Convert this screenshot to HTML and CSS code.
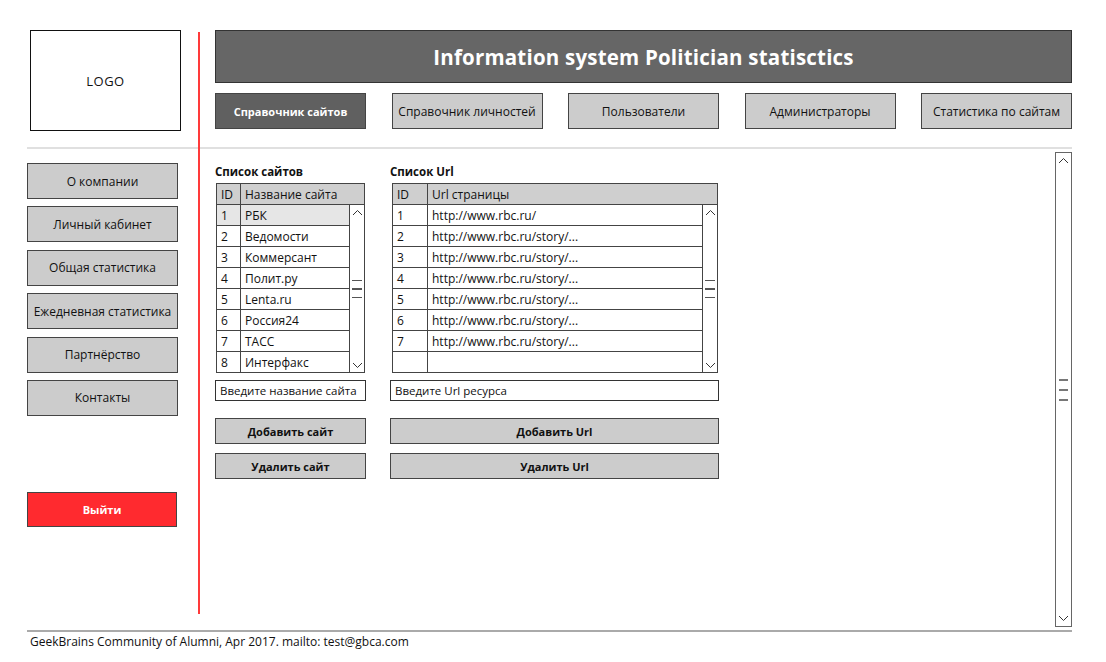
FILE: index.html
```html
<!DOCTYPE html>
<html lang="ru">
<head>
<meta charset="utf-8">
<title>Information system Politician statisctics</title>
<link rel="stylesheet" href="styles.css">
</head>
<body>
<div class="app">
  <div class="logo">LOGO</div>

  <div class="head">
    <div class="titlebar">Information system Politician statisctics</div>
    <nav class="nav">
      <div class="nbtn active">Справочник сайтов</div>
      <div class="nbtn">Справочник личностей</div>
      <div class="nbtn">Пользователи</div>
      <div class="nbtn">Администраторы</div>
      <div class="nbtn">Статистика по сайтам</div>
    </nav>
  </div>

  <div class="divider"></div>

  <aside class="side">
    <div class="sbtn">О компании</div>
    <div class="sbtn">Личный кабинет</div>
    <div class="sbtn">Общая статистика</div>
    <div class="sbtn">Ежедневная статистика</div>
    <div class="sbtn">Партнёрство</div>
    <div class="sbtn">Контакты</div>
    <div class="logout">Выйти</div>
  </aside>

  <main class="main">
    <section class="group sites">
      <h3 class="gtitle">Список сайтов</h3>
      <div class="table">
        <div class="thead"><div class="c-id">ID</div><div class="c-name">Название сайта</div></div>
        <div class="tbody">
          <div class="rows">
            <div class="row sel"><div class="c-id">1</div><div class="c-name">РБК</div></div>
            <div class="row"><div class="c-id">2</div><div class="c-name">Ведомости</div></div>
            <div class="row"><div class="c-id">3</div><div class="c-name">Коммерсант</div></div>
            <div class="row"><div class="c-id">4</div><div class="c-name">Полит.ру</div></div>
            <div class="row"><div class="c-id">5</div><div class="c-name">Lenta.ru</div></div>
            <div class="row"><div class="c-id">6</div><div class="c-name">Россия24</div></div>
            <div class="row"><div class="c-id">7</div><div class="c-name">ТАСС</div></div>
            <div class="row last"><div class="c-id">8</div><div class="c-name">Интерфакс</div></div>
          </div>
          <div class="vscroll">
            <svg class="chev" width="11" height="7" viewBox="0 0 11 7"><polyline points="1,6 5.5,1.5 10,6" /></svg>
            <div class="grip"><span></span><span></span><span></span></div>
            <svg class="chev" width="11" height="7" viewBox="0 0 11 7"><polyline points="1,1 5.5,5.5 10,1" /></svg>
          </div>
        </div>
      </div>
      <div class="input">Введите название сайта</div>
      <div class="btn first">Добавить сайт</div>
      <div class="btn">Удалить сайт</div>
    </section>

    <section class="group urls">
      <h3 class="gtitle">Список Url</h3>
      <div class="table">
        <div class="thead"><div class="c-id">ID</div><div class="c-name">Url страницы</div></div>
        <div class="tbody">
          <div class="rows">
            <div class="row"><div class="c-id">1</div><div class="c-name">http://www.rbc.ru/</div></div>
            <div class="row"><div class="c-id">2</div><div class="c-name">http://www.rbc.ru/story/...</div></div>
            <div class="row"><div class="c-id">3</div><div class="c-name">http://www.rbc.ru/story/...</div></div>
            <div class="row"><div class="c-id">4</div><div class="c-name">http://www.rbc.ru/story/...</div></div>
            <div class="row"><div class="c-id">5</div><div class="c-name">http://www.rbc.ru/story/...</div></div>
            <div class="row"><div class="c-id">6</div><div class="c-name">http://www.rbc.ru/story/...</div></div>
            <div class="row"><div class="c-id">7</div><div class="c-name">http://www.rbc.ru/story/...</div></div>
            <div class="row last"><div class="c-id"></div><div class="c-name"></div></div>
          </div>
          <div class="vscroll">
            <svg class="chev" width="11" height="7" viewBox="0 0 11 7"><polyline points="1,6 5.5,1.5 10,6" /></svg>
            <div class="grip"><span></span><span></span><span></span></div>
            <svg class="chev" width="11" height="7" viewBox="0 0 11 7"><polyline points="1,1 5.5,5.5 10,1" /></svg>
          </div>
        </div>
      </div>
      <div class="input">Введите Url ресурса</div>
      <div class="btn first">Добавить Url</div>
      <div class="btn">Удалить Url</div>
    </section>

    <div class="spacer"></div>

    <div class="pscroll">
      <svg class="chev" width="11" height="7" viewBox="0 0 11 7"><polyline points="1,6 5.5,1.5 10,6" /></svg>
      <div class="grip"><span></span><span></span><span></span></div>
      <svg class="chev" width="11" height="7" viewBox="0 0 11 7"><polyline points="1,1 5.5,5.5 10,1" /></svg>
    </div>
  </main>

  <div class="redline"></div>

  <footer class="footer">GeekBrains Community of Alumni, Apr 2017. mailto: test@gbca.com</footer>
</div>
</body>
</html>
```

FILE: styles.css
```css
* { box-sizing: border-box; }

html, body {
  margin: 0;
  padding: 0;
  background: #fff;
}

body {
  width: 1106px;
  height: 662px;
  overflow: hidden;
  font-family: "Open Sans", "DejaVu Sans", sans-serif;
  color: #111;
  font-size: 12px;
}

.app {
  display: grid;
  grid-template-columns: 154px 34px 857px;
  grid-template-rows: 117px 2px 477px auto;
  padding: 30px 0 0 27px;
}

/* ---------- top ---------- */
.logo {
  grid-column: 1;
  grid-row: 1;
  margin-left: 3px;
  width: 151px;
  height: 101px;
  border: 1.5px solid #111;
  display: flex;
  align-items: center;
  justify-content: center;
  font-size: 13px;
  letter-spacing: 0.5px;
}

.head {
  grid-column: 3;
  grid-row: 1;
  display: flex;
  flex-direction: column;
}

.titlebar {
  height: 53px;
  background: #666;
  border: 1.5px solid #333;
  color: #fff;
  font-weight: 700;
  font-size: 20.5px;
  display: flex;
  align-items: center;
  justify-content: center;
  letter-spacing: 0.2px;
}

.nav {
  margin-top: 10px;
  display: flex;
  justify-content: space-between;
}

.nbtn {
  width: 151px;
  height: 36px;
  background: #cccccc;
  border: 1.5px solid #444;
  display: flex;
  align-items: center;
  justify-content: center;
  font-size: 12px;
  white-space: nowrap;
}

.nbtn.active {
  background: #606060;
  color: #fff;
  font-weight: 700;
  font-size: 11px;
}

.divider {
  grid-column: 1 / -1;
  grid-row: 2;
  background: #e0e0e0;
  height: 2px;
}

.redline {
  grid-column: 2;
  grid-row: 1 / 4;
  margin-left: 17px;
  margin-top: 2px;
  margin-bottom: 12px;
  width: 2px;
  background: #ff3a3a;
}

/* ---------- sidebar ---------- */
.side {
  grid-column: 1;
  grid-row: 3;
  padding-top: 14px;
  display: flex;
  flex-direction: column;
  gap: 7.4px;
}

.sbtn {
  width: 151px;
  height: 36px;
  background: #cccccc;
  border: 1.5px solid #444;
  display: flex;
  align-items: center;
  justify-content: center;
  font-size: 12px;
  white-space: nowrap;
}

.logout {
  margin-top: 69px;
  width: 150px;
  height: 35px;
  background: #ff2a2f;
  border: 1.5px solid #444;
  color: #fff;
  font-weight: 700;
  display: flex;
  align-items: center;
  justify-content: center;
  font-size: 11px;
}

/* ---------- main ---------- */
.main {
  grid-column: 3;
  grid-row: 3;
  display: flex;
  align-items: flex-start;
}

.group {
  display: flex;
  flex-direction: column;
}

.sites { width: 151px; }
.urls { width: 329px; margin-left: 24px; }

.gtitle {
  margin: 15px 0 0 0;
  height: 15px;
  line-height: 15px;
  font-size: 11.5px;
  font-weight: 700;
}

.table {
  margin: 4px 1px 0 1px;
  border: 1.5px solid #444;
}

.urls .table { margin-left: 2px; }

.thead {
  display: flex;
  height: 21px;
  background: #cfcfcf;
  border-bottom: 1.5px solid #444;
}

.thead > div, .row > div {
  display: flex;
  align-items: center;
  padding-left: 4px;
  font-size: 12px;
  white-space: nowrap;
  overflow: hidden;
}

.c-id {
  width: 24px;
  flex: none;
  border-right: 1.5px solid #444;
}

.urls .c-id { width: 35px; }

.c-name { flex: 1; }

.tbody {
  display: flex;
}

.rows {
  flex: 1;
  display: flex;
  flex-direction: column;
}

.row {
  display: flex;
  height: 21px;
  border-bottom: 1.5px solid #444;
}

.row.last { border-bottom: none; height: 20px; }

.row.sel { background: #e6e6e6; }

.vscroll {
  width: 15px;
  flex: none;
  border-left: 1.5px solid #444;
  background: #fff;
  display: flex;
  flex-direction: column;
  align-items: center;
  justify-content: space-between;
  padding: 4px 0 3px;
}

.chev polyline {
  fill: none;
  stroke: #333;
  stroke-width: 1;
}

.grip {
  display: flex;
  flex-direction: column;
  gap: 7px;
}

.grip span {
  display: block;
  width: 10px;
  height: 1.5px;
  background: #555;
}

.input {
  margin-top: 7px;
  height: 21px;
  border: 1.5px solid #333;
  background: #fff;
  display: flex;
  align-items: center;
  padding-left: 4px;
  font-size: 11.5px;
  white-space: nowrap;
  overflow: hidden;
}

.btn {
  margin-top: 9px;
  height: 26px;
  background: #cccccc;
  border: 1.5px solid #444;
  display: flex;
  align-items: center;
  justify-content: center;
  font-weight: 700;
  font-size: 11px;
}

.btn.first { margin-top: 17px; }

.spacer { flex: 1; }

.pscroll {
  margin-top: 3px;
  width: 17px;
  height: 475px;
  border: 1.5px solid #666;
  display: flex;
  flex-direction: column;
  align-items: center;
  justify-content: space-between;
  padding: 4px 0 4px;
}

.pscroll .grip { gap: 8px; }
.pscroll .grip span { width: 9px; height: 2px; background: #777; }

/* ---------- footer ---------- */
.footer {
  grid-column: 1 / -1;
  grid-row: 4;
  margin-top: 4px;
  border-top: 2px solid #aaa;
  padding: 2px 0 0 3px;
  font-size: 12px;
  line-height: 16px;
}
```
